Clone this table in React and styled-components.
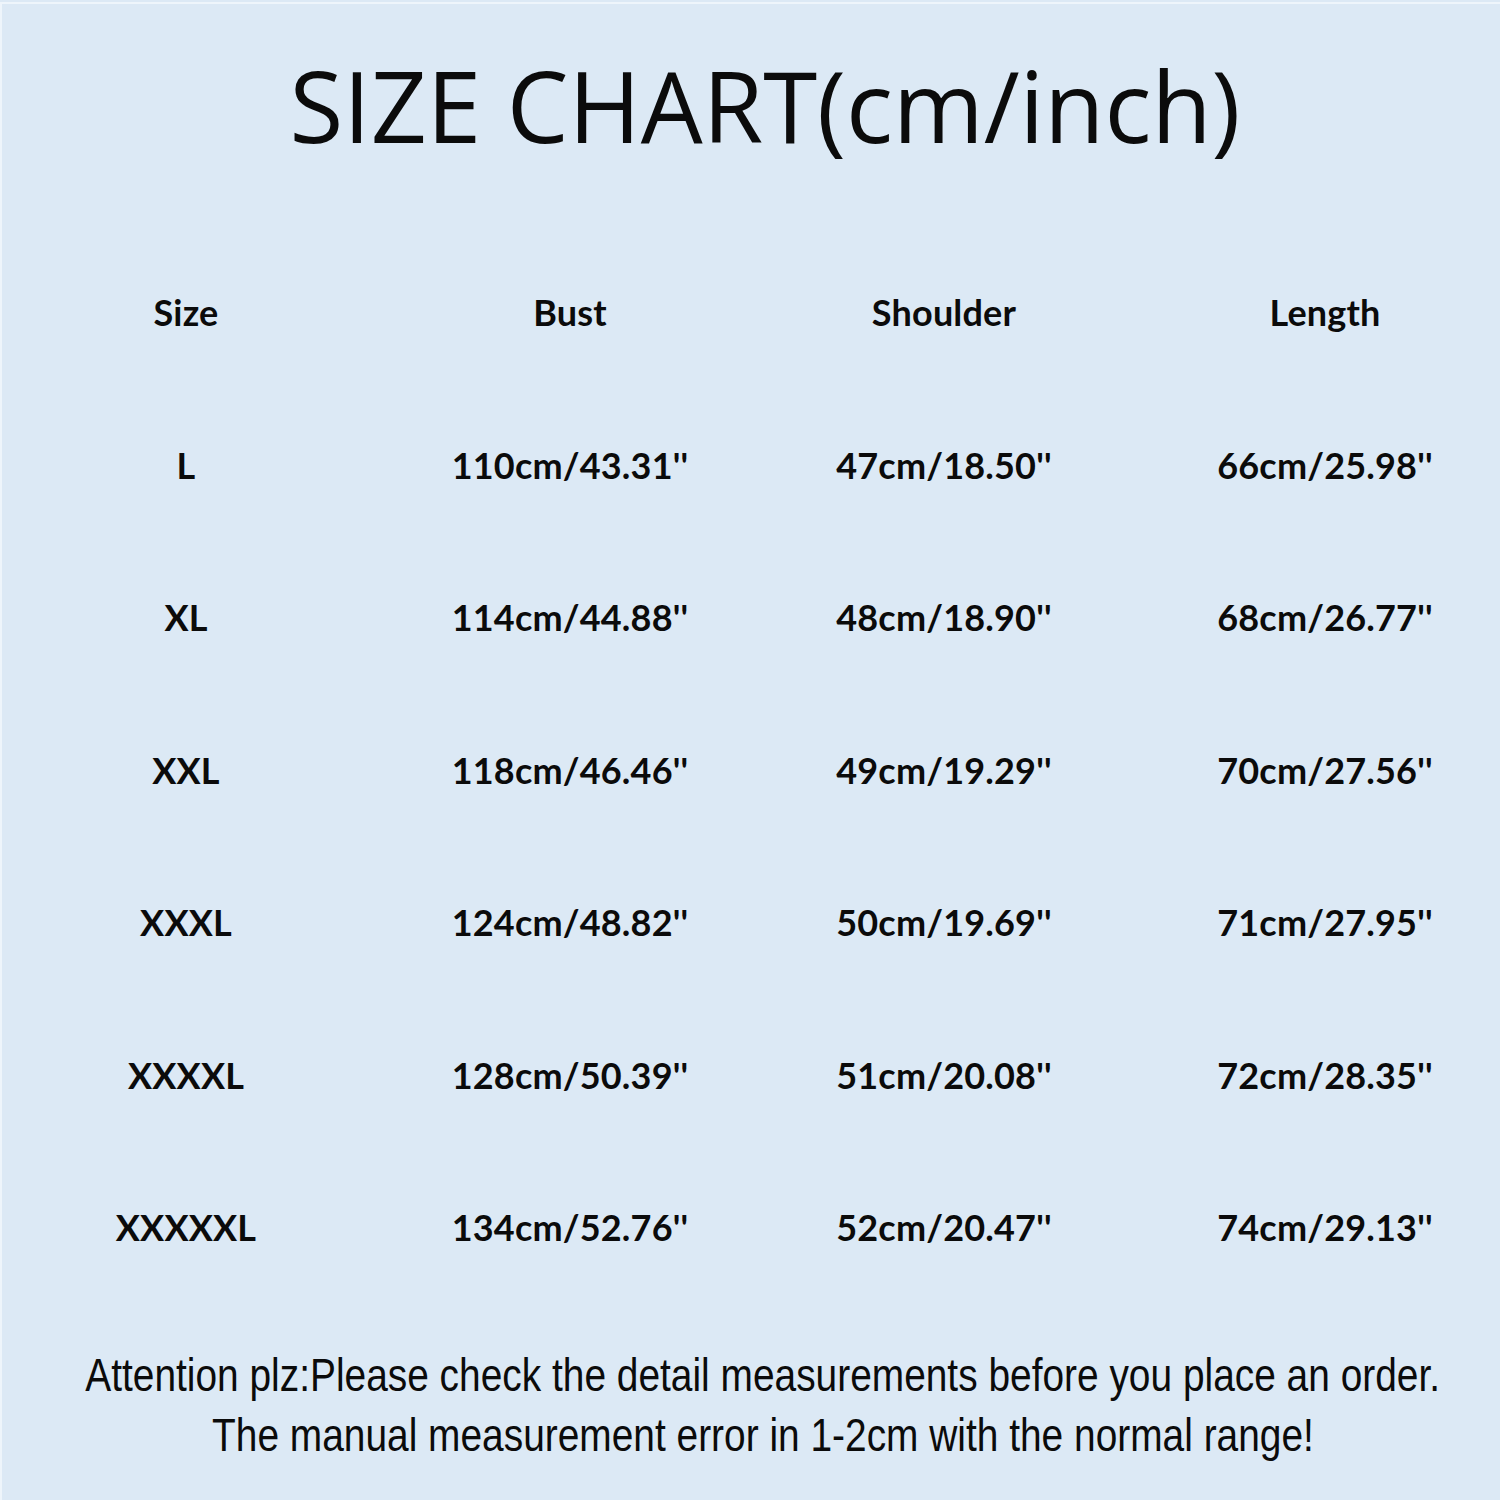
import React from "react";
import styled, { createGlobalStyle } from "styled-components";

const Global = createGlobalStyle`
  html, body { margin: 0; padding: 0; background: #dce9f5; }
  body { overflow: hidden; }
`;

const Page = styled.div`
  width: 1500px;
  height: 1500px;
  background: #dce9f5;
  color: #0b0b0b;
  display: flex;
  flex-direction: column;
  overflow: hidden;
  box-sizing: border-box;
  border-top: 2px solid #dce9f5;
  box-shadow: inset 2px 2px 0 #eef5fb;
`;

const Title = styled.h1`
  margin: 0;
  height: 234px;
  box-sizing: border-box;
  padding-top: 54px;
  padding-left: 30px;
  font-family: "Open Sans", sans-serif;
  font-weight: 400;
  font-size: 98px;
  line-height: 1;
  text-align: center;
`;

const Table = styled.div`
  display: grid;
  grid-template-columns: 372px 396px 352px 410px;
  grid-auto-rows: 152.5px;
  font-family: "Lato", sans-serif;
  font-weight: 700;
  font-size: 36px;
  line-height: 1;
`;

const Cell = styled.div`
  display: flex;
  align-items: center;
  justify-content: center;
  white-space: nowrap;
  letter-spacing: 0.005em;
`;

const Notes = styled.div`
  margin-top: 41px;
  display: flex;
  flex-direction: column;
  align-items: center;
  padding-left: 26px;
  font-family: "Liberation Sans", "Arial", sans-serif;
  font-weight: 400;
  font-size: 46px;
  line-height: 60px;
`;

const Line = styled.div`
  white-space: nowrap;
  transform: scaleX(0.845);
  transform-origin: center;
`;

const headers = ["Size", "Bust", "Shoulder", "Length"];
const rows = [
  ["L", "110cm/43.31''", "47cm/18.50''", "66cm/25.98''"],
  ["XL", "114cm/44.88''", "48cm/18.90''", "68cm/26.77''"],
  ["XXL", "118cm/46.46''", "49cm/19.29''", "70cm/27.56''"],
  ["XXXL", "124cm/48.82''", "50cm/19.69''", "71cm/27.95''"],
  ["XXXXL", "128cm/50.39''", "51cm/20.08''", "72cm/28.35''"],
  ["XXXXXL", "134cm/52.76''", "52cm/20.47''", "74cm/29.13''"],
];

export default function App() {
  return (
    <Page>
      <Global />
      <Title>SIZE CHART(cm/inch)</Title>
      <Table>
        {headers.map((h) => (
          <Cell key={h}>{h}</Cell>
        ))}
        {rows.map((r) =>
          r.map((v, i) => <Cell key={r[0] + i}>{v}</Cell>)
        )}
      </Table>
      <Notes>
        <Line>Attention plz:Please check the detail measurements before you place an order.</Line>
        <Line>The manual measurement error in 1-2cm with the normal range!</Line>
      </Notes>
    </Page>
  );
}
